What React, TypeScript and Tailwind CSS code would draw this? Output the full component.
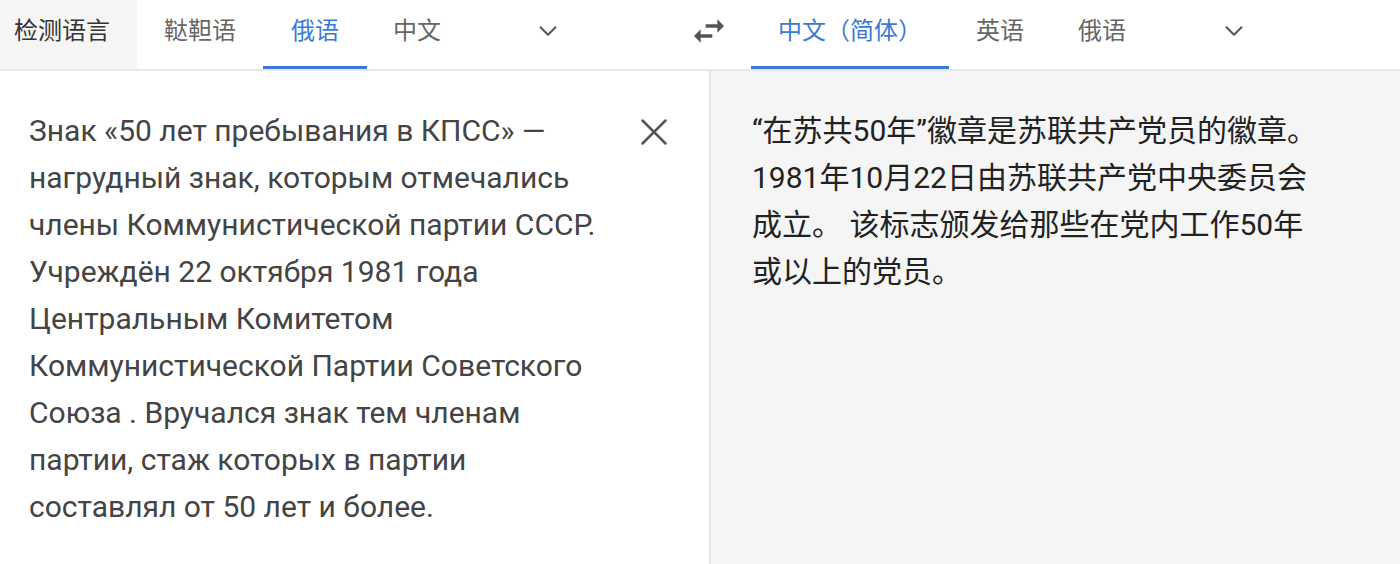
import { ChevronDown, X } from "lucide-react";

const font = { fontFamily: '"Roboto", "Noto Sans CJK SC", sans-serif' };

function Tab({ label, active, pad }: { label: string; active?: boolean; pad: string }) {
  return (
    <div className={`relative flex h-full items-center pb-[8px] ${pad} ${active ? "text-[#3a7ad6]" : "text-[#666]"}`}>
      {label}
      {active && <div className="absolute bottom-0 left-0 right-0 h-[3px] bg-[#3a7ad6]" />}
    </div>
  );
}

function SwapIcon() {
  return (
    <svg width="40" height="40" viewBox="0 0 24 24" fill="#555">
      <path d="M6.99 11L3 15l3.99 4v-3H14v-2H6.99v-3zM21 9l-3.99-4v3H10v2h7.01v3L21 9z" />
    </svg>
  );
}

const ru = [
  "Знак «50 лет пребывания в КПСС» —",
  "нагрудный знак, которым отмечались",
  "члены Коммунистической партии СССР.",
  "Учреждён 22 октября 1981 года",
  "Центральным Комитетом",
  "Коммунистической Партии Советского",
  "Союза . Вручался знак тем членам",
  "партии, стаж которых в партии",
  "составлял от 50 лет и более.",
];

const zh = [
  "“在苏共50年”徽章是苏联共产党员的徽章。",
  "1981年10月22日由苏联共产党中央委员会",
  "成立。 该标志颁发给那些在党内工作50年",
  "或以上的党员。",
];

export default function App() {
  return (
    <div className="h-[564px] w-[1400px] overflow-hidden bg-white" style={font}>
      <div className="flex h-[71px] border-b-2 border-[#e8e8e8] text-[24px]">
        <div className="flex h-full items-center bg-[#f5f5f5] pb-[8px] pl-[14px] pr-[27px] text-[#333]">检测语言</div>
        <Tab label="鞑靼语" pad="px-[27px]" />
        <Tab label="俄语" active pad="px-[28px]" />
        <Tab label="中文" pad="px-[26px]" />
        <div className="ml-[66px] flex items-center pb-[8px]">
          <ChevronDown size={30} strokeWidth={1.6} color="#555" />
        </div>
        <div className="ml-[126px] flex items-center pb-[8px]">
          <SwapIcon />
        </div>
        <div className="ml-[22px] flex">
          <Tab label="中文（简体）" active pad="px-[27px]" />
          <Tab label="英语" pad="px-[27px]" />
          <Tab label="俄语" pad="px-[27px]" />
          <div className="ml-[66px] flex items-center pb-[8px]">
            <ChevronDown size={30} strokeWidth={1.6} color="#555" />
          </div>
        </div>
      </div>
      <div className="flex h-[493px]">
        <div className="flex w-[709px] justify-between pl-[29px] pr-[32px] pt-[36px]">
          <p className="text-[30px] leading-[47px] text-[#444]">
            {ru.map((l) => (
              <span key={l} className="block whitespace-nowrap">{l}</span>
            ))}
          </p>
          <div className="mt-[2px]">
            <X size={46} strokeWidth={1.3} color="#555" />
          </div>
        </div>
        <div className="flex-1 border-l-2 border-[#e6e6e6] bg-[#f5f5f5] pl-[41px] pt-[36px]">
          <p className="text-[30px] leading-[47px] text-[#222]">
            {zh.map((l) => (
              <span key={l} className="block whitespace-nowrap">{l}</span>
            ))}
          </p>
        </div>
      </div>
    </div>
  );
}
